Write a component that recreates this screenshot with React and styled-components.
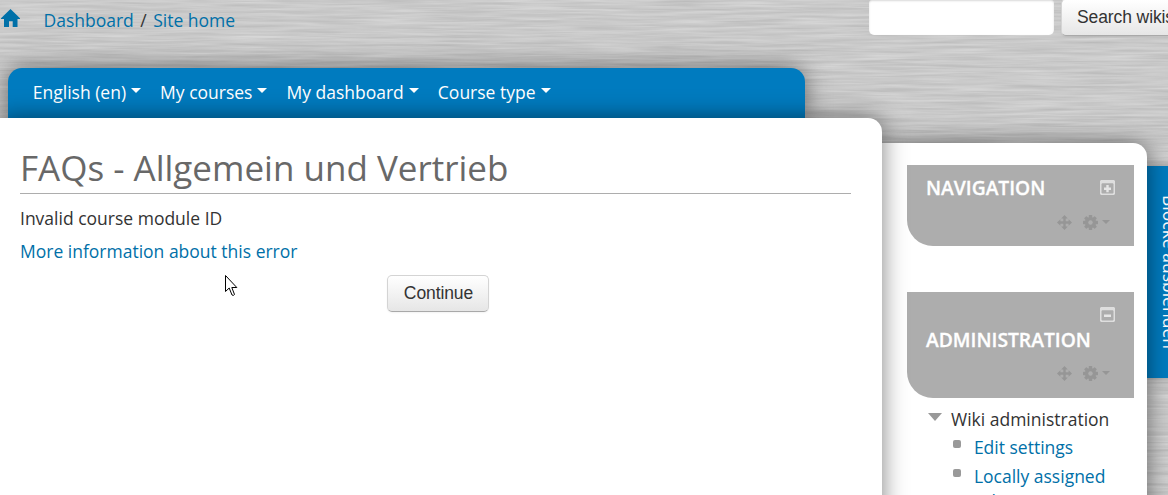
import React from 'react';
import styled, { createGlobalStyle } from 'styled-components';

const menuItems = ['English (en)', 'My courses', 'My dashboard', 'Course type'];

const adminLinks = ['Edit settings', 'Locally assigned roles'];

const HomeIcon = () => (
  <svg width="20" height="18" viewBox="0 0 20 18">
    <path d="M9.5 0 L19 9.3 V10 H16.5 V18 H11.7 V12.3 H8 V18 H3 V10 H0 V9.3 Z" fill="#0070a8" />
  </svg>
);

const MoveIcon = () => (
  <svg width="15" height="15" viewBox="0 0 15 15">
    <path
      d="M7.5 0 L10.8 3.4 H8.7 V6.3 H11.6 V4.2 L15 7.5 L11.6 10.8 V8.7 H8.7 V11.6 H10.8 L7.5 15 L4.2 11.6 H6.3 V8.7 H3.4 V10.8 L0 7.5 L3.4 4.2 V6.3 H6.3 V3.4 H4.2 Z"
      fill="#969696"
    />
  </svg>
);

const GearIcon = () => (
  <svg width="15" height="15" viewBox="0 0 15 15">
    <g fill="#969696">
      {[0, 45, 90, 135].map((angle) => (
        <rect key={angle} x="5.8" y="0" width="3.4" height="15" rx="0.6" transform={`rotate(${angle} 7.5 7.5)`} />
      ))}
      <circle cx="7.5" cy="7.5" r="5.6" />
    </g>
    <circle cx="7.5" cy="7.5" r="2.2" fill="#adadad" />
  </svg>
);

const ToggleIcon = ({ open }) => (
  <svg width="15" height="15" viewBox="0 0 15 15">
    <path d="M1 0 H14 L15 1 V14 L14 15 H1 L0 14 V1 Z M1.5 4 V12.8 L2.2 13.5 H12.8 L13.5 12.8 V4 L12.8 3.3 H2.2 Z" fill="#dedede" fillRule="evenodd" />
    <path d={open ? 'M4 7.5 H11 V10 H4 Z' : 'M4 7.5 H6.3 V5 H8.7 V7.5 H11 V10 H8.7 V12.3 H6.3 V10 H4 Z'} fill="#e6e6e6" />
  </svg>
);

const Cursor = () => (
  <CursorSvg width="13" height="22" viewBox="0 0 13 22">
    <path d="M.5 .5 V16.5 L4.2 13 L7 20 Q8.5 21 9.5 19.5 L6.8 12.5 H11.8 Z" fill="#fff" stroke="#000" />
  </CursorSvg>
);

const BrushedMetal = () => (
  <Texture>
    <filter id="brushed" x="0" y="0" width="100%" height="100%" colorInterpolationFilters="sRGB">
      <feTurbulence type="fractalNoise" baseFrequency="0.014 0.36" numOctaves="3" seed="7" />
      <feColorMatrix values="0.15 0 0 0 0.715  0.15 0 0 0 0.715  0.15 0 0 0 0.715  0 0 0 0 1" />
    </filter>
    <rect width="100%" height="100%" filter="url(#brushed)" />
  </Texture>
);

const Block = ({ title, open }) => (
  <BlockHeader $stacked={open}>
    <TitleRow $stacked={open}>
      <BlockTitle>{title}</BlockTitle>
      <ToggleIcon open={open} />
    </TitleRow>
    <BlockActions $stacked={open}>
      <MoveIcon />
      <GearMenu>
        <GearIcon />
        <Caret $small />
      </GearMenu>
    </BlockActions>
  </BlockHeader>
);

const App = () => (
  <Page>
    <GlobalStyle />
    <BrushedMetal />
    <TopBar>
      <Breadcrumb>
        <HomeIcon />
        <Crumbs>
          <Link href="#">Dashboard</Link>
          <span>/</span>
          <Link href="#">Site home</Link>
        </Crumbs>
      </Breadcrumb>
      <Search>
        <SearchInput type="text" aria-label="Search" />
        <Button>Search wikis</Button>
      </Search>
    </TopBar>
    <NavBar>
      {menuItems.map((item) => (
        <NavItem key={item}>
          {item}
          <Caret />
        </NavItem>
      ))}
    </NavBar>
    <Columns>
      <Main>
        <Heading>FAQs - Allgemein und Vertrieb</Heading>
        <Message>Invalid course module ID</Message>
        <Message>
          <Link href="#">More information about this error</Link>
        </Message>
        <ButtonRow>
          <Button>Continue</Button>
        </ButtonRow>
        <Cursor />
      </Main>
      <Sidebar>
        <Block title="Navigation" />
        <Block title="Administration" open />
        <Tree>
          <Branch>
            <Arrow />
            Wiki administration
          </Branch>
          {adminLinks.map((link) => (
            <Leaf key={link}>
              <Bullet />
              <Link href="#">{link}</Link>
            </Leaf>
          ))}
        </Tree>
      </Sidebar>
      <DockTab>
        <span>Blöcke ausblenden</span>
      </DockTab>
    </Columns>
  </Page>
);

const GlobalStyle = createGlobalStyle`
  * {
    box-sizing: border-box;
  }

  body {
    margin: 0;
    overflow: hidden;
    font-family: 'Open Sans', sans-serif;
    font-size: 17.5px;
    line-height: 25px;
    color: #333;
  }

  svg {
    display: block;
    flex-shrink: 0;
  }
`;

const Page = styled.div`
  position: relative;
  isolation: isolate;
  display: flex;
  flex-direction: column;
  width: 1168px;
  height: 495px;
  overflow: hidden;
  background: #c6c6c6;
`;

const Texture = styled.svg`
  position: absolute;
  inset: 0;
  z-index: -1;
  width: 100%;
  height: 100%;
`;

const Link = styled.a`
  color: #0070a8;
  text-decoration: none;
`;

const TopBar = styled.header`
  display: flex;
  align-items: flex-start;
  height: 68px;
  flex-shrink: 0;
`;

const Breadcrumb = styled.nav`
  display: flex;
  width: 869px;
  flex-shrink: 0;
  padding: 8px 0 0 1px;
  gap: 22.5px;

  svg {
    margin-top: 1px;
  }
`;

const Crumbs = styled.div`
  display: flex;
  gap: 6.5px;
`;

const Search = styled.form`
  display: flex;
  flex-shrink: 0;
  gap: 7px;
`;

const SearchInput = styled.input`
  width: 185px;
  height: 35px;
  border: 0;
  border-radius: 3px 3px 5px 5px;
  background: #fff;
  box-shadow: inset 0 1px 2px rgba(0, 0, 0, 0.15);
`;

const Button = styled.button`
  width: 102px;
  height: 37px;
  padding: 0 0 0 1px;
  flex-shrink: 0;
  border: 1px solid #d4d4d4;
  border-bottom-color: #a9a9a9;
  border-radius: 5px;
  background: linear-gradient(#fff, #e6e6e6);
  box-shadow: 0 1px 2px rgba(0, 0, 0, 0.05);
  font-family: 'Liberation Sans', Arial, sans-serif;
  font-size: 17.5px;
  letter-spacing: -0.1px;
  color: #333;
  white-space: nowrap;

  ${Search} & {
    width: 128px;
    margin-top: -1px;
    border-top-color: #eee;
  }
`;

const NavBar = styled.nav`
  display: flex;
  align-items: center;
  flex-shrink: 0;
  width: 797px;
  height: 50px;
  margin-left: 8px;
  padding: 0 24.8px 1px;
  gap: 19px;
  border-radius: 14px 14px 0 0;
  background: #007bbf;
  box-shadow: 0 0 25px rgba(0, 0, 0, 0.5);
`;

const NavItem = styled.div`
  display: flex;
  align-items: center;
  gap: 5px;
  color: #fff;
  white-space: nowrap;
`;

const Caret = styled.span`
  border: solid transparent;
  border-width: ${({ $small }) => ($small ? '4px 4px 0' : '5px 5px 0')};
  border-top-color: ${({ $small }) => ($small ? '#969696' : '#fff')};
  margin-bottom: ${({ $small }) => ($small ? '1px' : '4px')};
`;

const Columns = styled.div`
  display: flex;
  align-items: flex-start;
  flex: 1;
  min-height: 0;
`;

const Main = styled.main`
  position: relative;
  z-index: 2;
  width: 882px;
  height: 420px;
  flex-shrink: 0;
  padding: 25px 31px 0 20px;
  border-radius: 0 14px 0 0;
  background: #fff;
  box-shadow: 0 0 25px rgba(0, 0, 0, 0.5);
`;

const Heading = styled.h1`
  height: 51px;
  margin: 0 0 12px;
  border-bottom: 1px solid #adadad;
  font-size: 35px;
  font-weight: 400;
  line-height: 50px;
  color: #686868;
`;

const Message = styled.p`
  margin: 0 0 8px;
`;

const ButtonRow = styled.div`
  display: flex;
  justify-content: center;
  padding: 3px 0 0 5px;
`;

const CursorSvg = styled.svg`
  position: absolute;
  left: 225px;
  top: 157px;
`;

const Sidebar = styled.aside`
  position: relative;
  z-index: 1;
  width: 265px;
  height: 420px;
  flex-shrink: 0;
  margin-top: 25px;
  padding: 22px 13px 0 25px;
  border-radius: 0 14px 0 0;
  background: #fff;
  box-shadow: 0 0 25px rgba(0, 0, 0, 0.5);
`;

const BlockHeader = styled.div`
  height: ${({ $stacked }) => ($stacked ? '106px' : '81px')};
  margin-bottom: ${({ $stacked }) => ($stacked ? '8px' : '46px')};
  padding: ${({ $stacked }) => ($stacked ? '15px' : '10px')} 19px 0;
  border-radius: 0 0 0 26px;
  background: #adadad;
`;

const TitleRow = styled.div`
  display: flex;
  flex-direction: ${({ $stacked }) => ($stacked ? 'column-reverse' : 'row')};
  justify-content: space-between;
  align-items: ${({ $stacked }) => ($stacked ? 'stretch' : 'flex-start')};
  gap: ${({ $stacked }) => ($stacked ? '5px' : '0')};

  svg {
    align-self: flex-end;
    margin-bottom: ${({ $stacked }) => ($stacked ? '0' : '6px')};
  }
`;

const BlockTitle = styled.h2`
  margin: 0;
  font-size: 19.25px;
  font-weight: 600;
  line-height: 26px;
  text-transform: uppercase;
  color: #fff;
  -webkit-text-stroke: 0.3px #fff;
`;

const BlockActions = styled.div`
  display: flex;
  justify-content: flex-end;
  gap: 11px;
  padding: ${({ $stacked }) => ($stacked ? '13px' : '14px')} 5px 0 0;
`;

const GearMenu = styled.div`
  display: flex;
  align-items: center;
  gap: 4px;
`;

const Tree = styled.div`
  padding-left: 20.5px;
`;

const Branch = styled.div`
  display: flex;
  align-items: center;
  gap: 9.5px;
  height: 27px;
  white-space: nowrap;
`;

const Arrow = styled.span`
  margin-bottom: 5px;
  border: solid transparent;
  border-width: 8px 7.5px 0;
  border-top-color: #999;
`;

const Leaf = styled.div`
  display: flex;
  gap: 13.4px;
  padding: 2px 13px 2px 25px;
`;

const Bullet = styled.span`
  flex-shrink: 0;
  width: 8px;
  height: 8px;
  margin-top: 5px;
  border-radius: 2px;
  background: #999;
`;

const DockTab = styled.div`
  display: flex;
  justify-content: center;
  width: 35px;
  height: 212px;
  flex-shrink: 0;
  margin-top: 48px;
  background: #007bbf;
  color: #fff;
  writing-mode: vertical-rl;
  box-shadow: 0 0 10px rgba(0, 0, 0, 0.2);
  white-space: nowrap;
`;

export default App;
